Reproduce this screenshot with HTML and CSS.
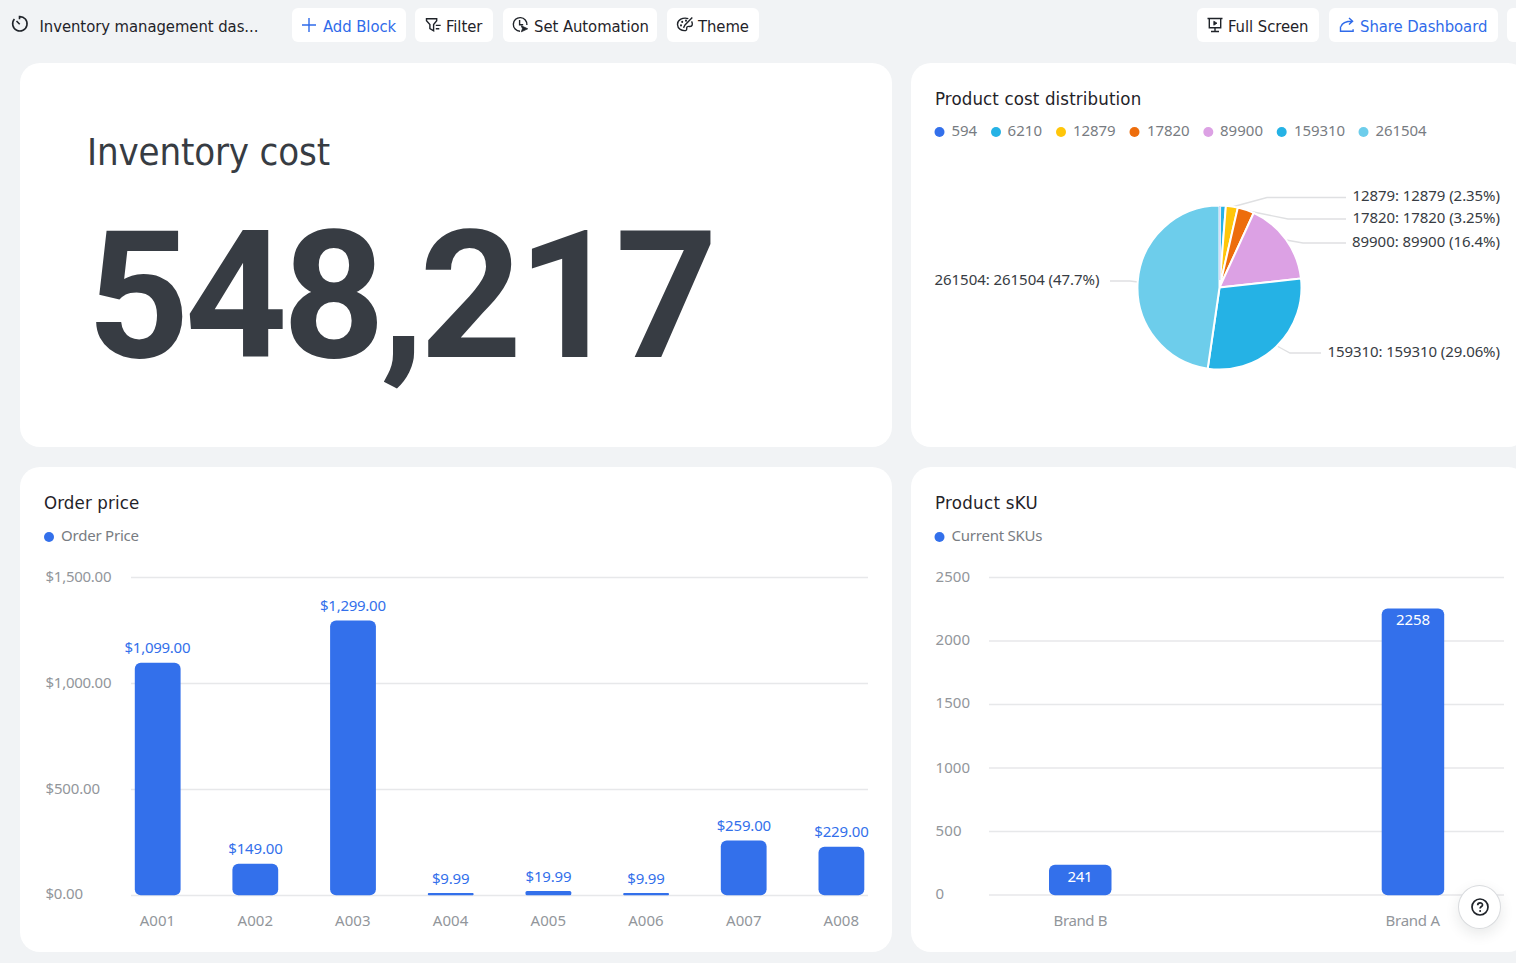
FILE: index.html
```html
<!DOCTYPE html>
<html lang="en">
<head>
<meta charset="utf-8">
<title>Inventory management dashboard</title>
<link rel="stylesheet" href="styles.css">
</head>
<body>
<header class="toolbar">
  <div class="doc">
    <svg class="icon" width="18" height="18" viewBox="0 0 18 18"><path d="M8.500 4.200V1.600A7.200 7.200 0 1 1 3.400 4.100M5.500 6l3.200 3.200" stroke-width="1.600"/></svg>
    <span class="doc-name">Inventory management das...</span>
  </div>
  <button class="btn add blue"><svg class="icon" width="16" height="16" viewBox="0 0 16 16"><path d="M8 1v14M1 8h14"/></svg><span>Add Block</span></button>
  <button class="btn filter"><svg class="icon" width="17" height="16" viewBox="0 0 17 16"><path d="M1.500 1.800h10.200v2L8.600 7.500v6.300L4.900 11.600V7.500L1.500 3.800zM10.800 8.400h4.900M10.800 11.800h3.500"/></svg><span>Filter</span></button>
  <button class="btn auto"><svg class="icon" width="17" height="17" viewBox="0 0 17 17"><path d="M8 15.200A6.800 6.800 0 1 1 14.900 9M7.600 4v4.800h3.600"/><path class="solid" d="M9.300 9.800l6.400 3-6.400 3 1.200-3z"/></svg><span>Set Automation</span></button>
  <button class="btn theme"><svg class="icon" width="18" height="17" viewBox="0 0 18 17"><path d="M12.300 2.600C6.800.9 1.400 4 1.500 8.500c.1 4.300 4.300 6.600 8.200 6 2.200-.4.1-2.600 1.500-3.700 1.500-1.200 4.300.9 5-1.800.3-1.200 0-2.600-.6-3.600M16.300 1.500L9 9l-1.500 2.800"/><path d="M5 9.300v.2M6.200 5.700v.2M10 4.600v.2" stroke-width="2" stroke-linecap="round"/></svg><span>Theme</span></button>
  <button class="btn full"><svg class="icon" width="16" height="16" viewBox="0 0 16 16"><path d="M.5 1.500h15M2.300 1.500v9.200h11.400V1.500M8 10.700v3.600M4 14.500h8"/><path class="solid" d="M6.800 4.200l3.200 2-3.200 2z"/></svg><span>Full Screen</span></button>
  <button class="btn share blue"><svg class="icon" width="16" height="16" viewBox="0 0 16 16"><path d="M1.500 9.500v4.700h12.600v-1.900M2 9.500C3 6 6.500 4.300 13.200 4.300M10 .9l3.600 3.400L10 7.600"/></svg><span>Share Dashboard</span></button>
  <button class="btn more" aria-label="More"></button>
</header>

<main class="grid">
  <section class="card metric">
    <h2 class="metric-title">Inventory cost</h2>
    <div class="metric-value">548,217</div>
  </section>

  <section class="card">
    <h3 class="title t-dist">Product cost distribution</h3>
    <svg class="chart" width="617" height="330" viewBox="911 117 617 330">
      <g class="legend">
        <circle cx="939.500" cy="132" r="5" fill="#3370eb"/><text x="951.500" y="136" textLength="25.500">594</text>
        <circle cx="996" cy="132" r="5" fill="#25b2e5"/><text x="1007.500" y="136" textLength="34.500">6210</text>
        <circle cx="1061" cy="132" r="5" fill="#ffc60a"/><text x="1073" y="136" textLength="42.500">12879</text>
        <circle cx="1134.500" cy="132" r="5" fill="#ed6d0c"/><text x="1147" y="136" textLength="42.500">17820</text>
        <circle cx="1208.300" cy="132" r="5" fill="#dca1e4"/><text x="1220" y="136" textLength="43">89900</text>
        <circle cx="1281.700" cy="132" r="5" fill="#25b2e5"/><text x="1294" y="136" textLength="51">159310</text>
        <circle cx="1363.500" cy="132" r="5" fill="#6dcdeb"/><text x="1375.500" y="136" textLength="51">261504</text>
      </g>
      <g class="leader">
        <path d="M1232 207L1267 197.500H1346"/>
        <path d="M1246 210.500L1288 219H1346"/>
        <path d="M1286 240L1303 243H1346"/>
        <path d="M1277 346L1290 353H1321"/>
        <path d="M1110 281H1130L1138 282"/>
      </g>
      <g class="slices">
        <path fill="#25b2e5" d="M1219.500 287.500L1220.100 205.500A82 82 0 0 1 1225.900 205.750Z"/>
        <path fill="#ffc60a" d="M1219.500 287.500L1225.900 205.750A82 82 0 0 1 1237.840 207.600Z"/>
        <path fill="#ed6d0c" d="M1219.500 287.500L1237.840 207.600A82 82 0 0 1 1253.670 212.960Z"/>
        <path fill="#dca1e4" d="M1219.500 287.500L1253.670 212.960A82 82 0 0 1 1301 278.450Z"/>
        <path fill="#25b2e5" d="M1219.500 287.500L1301 278.450A82 82 0 0 1 1207.700 368.650Z"/>
        <path fill="#6dcdeb" d="M1219.500 287.500L1207.700 368.650A82 82 0 0 1 1219.500 205.500Z"/>
      </g>
      <path class="sliver" d="M1219.800 206V280"/>
      <g class="pie-label">
        <text x="1352.500" y="201" textLength="147.500">12879: 12879 (2.35%)</text>
        <text x="1352.500" y="222.500" textLength="147.500">17820: 17820 (3.25%)</text>
        <text x="1352" y="246.500" textLength="148">89900: 89900 (16.4%)</text>
        <text x="1327.500" y="357" textLength="172.500">159310: 159310 (29.06%)</text>
        <text x="934.500" y="285" textLength="165">261504: 261504 (47.7%)</text>
      </g>
    </svg>
  </section>

  <section class="card">
    <h3 class="title t-price">Order price</h3>
    <svg class="chart" width="872" height="431" viewBox="20 521 872 431">
      <g class="legend"><circle cx="49" cy="537" r="5" fill="#3370eb"/><text x="61" y="541" textLength="78">Order Price</text></g>
      <path class="rule" d="M131 577.500H868M131 683.500H868M131 789.500H868M131 895.500H868"/>
      <g class="axis">
        <text x="45.500" y="582" textLength="66">$1,500.00</text>
        <text x="45.500" y="688" textLength="66">$1,000.00</text>
        <text x="45.500" y="794" textLength="54.500">$500.00</text>
        <text x="45.500" y="899" textLength="37.500">$0.00</text>
      </g>
      <g class="bars">
        <rect x="134.800" y="662.800" width="45.800" height="232.400" rx="6"/>
        <rect x="232.400" y="863.800" width="45.800" height="31.400" rx="6"/>
        <rect x="330.100" y="620.400" width="45.800" height="274.800" rx="6"/>
        <rect x="427.800" y="893.100" width="45.800" height="2.100" rx="1"/>
        <rect x="525.500" y="891" width="45.800" height="4.200" rx="1.500"/>
        <rect x="623.200" y="893.100" width="45.800" height="2.100" rx="1"/>
        <rect x="720.800" y="840.500" width="45.800" height="54.700" rx="6"/>
        <rect x="818.500" y="846.800" width="45.800" height="48.400" rx="6"/>
      </g>
      <g class="value">
        <text x="124.500" y="653" textLength="66">$1,099.00</text>
        <text x="228.300" y="854" textLength="54.500">$149.00</text>
        <text x="320" y="611" textLength="66">$1,299.00</text>
        <text x="432" y="883.500" textLength="37.500">$9.99</text>
        <text x="525.500" y="882" textLength="46">$19.99</text>
        <text x="627.300" y="883.500" textLength="37.500">$9.99</text>
        <text x="716.700" y="831" textLength="54.500">$259.00</text>
        <text x="814.300" y="837" textLength="54.500">$229.00</text>
      </g>
      <g class="axis">
        <text x="139.700" y="925.500" textLength="35.500">A001</text>
        <text x="237.500" y="925.500" textLength="35.500">A002</text>
        <text x="335" y="925.500" textLength="35.500">A003</text>
        <text x="432.800" y="925.500" textLength="35.500">A004</text>
        <text x="530.500" y="925.500" textLength="35.500">A005</text>
        <text x="628.200" y="925.500" textLength="35.500">A006</text>
        <text x="726" y="925.500" textLength="35.500">A007</text>
        <text x="823.500" y="925.500" textLength="35.500">A008</text>
      </g>
    </svg>
  </section>

  <section class="card">
    <h3 class="title t-sku">Product sKU</h3>
    <svg class="chart" width="617" height="431" viewBox="911 521 617 431">
      <g class="legend"><circle cx="939.500" cy="537" r="5" fill="#3370eb"/><text x="951.500" y="541" textLength="91">Current SKUs</text></g>
      <path class="rule" d="M989 577.500H1504M989 641H1504M989 704.500H1504M989 768H1504M989 831.500H1504M989 895H1504"/>
      <g class="axis">
        <text x="935.500" y="582" textLength="34.500">2500</text>
        <text x="935.500" y="645" textLength="34.500">2000</text>
        <text x="935.500" y="708.400" textLength="34.500">1500</text>
        <text x="935.500" y="772.500" textLength="34.500">1000</text>
        <text x="935.500" y="836" textLength="26">500</text>
        <text x="935.500" y="899">0</text>
        <text x="1053.500" y="925.500" textLength="54">Brand B</text>
        <text x="1385.500" y="925.500" textLength="54.500">Brand A</text>
      </g>
      <g class="bars">
        <rect x="1049" y="864.800" width="62.500" height="30.400" rx="6"/>
        <rect x="1381.700" y="608.500" width="62.500" height="286.700" rx="6"/>
      </g>
      <g class="inside">
        <text x="1067.500" y="882" textLength="25">241</text>
        <text x="1396" y="625.400" textLength="34">2258</text>
      </g>
    </svg>
  </section>
</main>

<button class="help" aria-label="Help"><svg class="icon" width="20" height="20" viewBox="0 0 20 20"><circle cx="10" cy="10" r="8"/><path d="M7.700 8.200c0-3 4.800-3 4.800-.3 0 1.700-2.400 1.600-2.400 3.600"/><circle class="dot" cx="10.100" cy="14" r="1"/></svg></button>
</body>
</html>
```

FILE: styles.css
```css
* { box-sizing: border-box; }
body {
  margin: 0;
  width: 1516px;
  height: 963px;
  overflow: hidden;
  background: #f1f3f5;
  color: #1f2329;
  font-family: "Noto Sans", "Open Sans", sans-serif;
}
.toolbar {
  display: flex;
  width: 1540px;
  height: 63px;
  padding: 8px 0 0 10px;
}
.doc {
  display: flex;
  align-items: center;
  width: 282px;
  height: 34px;
  font: 16.500px "DejaVu Sans Condensed", "DejaVu Sans", sans-serif;
  font-stretch: condensed;
}
.doc .icon { margin: -2px 11px 0 .5px; }
.doc-name { letter-spacing: -0.050px; white-space: nowrap; margin-top: 3px; }
.icon { flex: none; fill: none; stroke: currentColor; stroke-width: 1.400; }
.icon .solid { fill: currentColor; stroke-width: .8; }
.icon .dot { fill: currentColor; stroke: none; }
.btn {
  display: flex;
  align-items: center;
  height: 34px;
  padding: 0 0 0 10px;
  border: 0;
  border-radius: 6px;
  background: #fff;
  color: #1f2329;
  font: 16.500px "DejaVu Sans Condensed", "DejaVu Sans", sans-serif;
  font-stretch: condensed;
  letter-spacing: -0.050px;
  white-space: nowrap;
}
.btn .icon { margin-top: -1px; margin-right: 5px; }
.btn span { margin-top: 3px; }
.blue { color: #2f6bea; }
.add { width: 114px; margin-right: 9px; padding-left: 9px; }
.add .icon { margin-right: 6px; }
.filter { width: 78px; margin-right: 10px; }
.filter .icon { margin-right: 4px; }
.auto { width: 154px; margin-right: 10px; padding-left: 9px; }
.theme { width: 92px; margin-right: 438px; padding-left: 9px; }
.theme .icon { margin-right: 4px; }
.full { width: 122px; margin-right: 10px; }
.share { width: 169px; margin-right: 9px; }
.more { width: 30px; }

.grid {
  display: grid;
  grid-template-columns: 872px 617px;
  grid-template-rows: 384px 485px;
  gap: 20px 19px;
  padding-left: 20px;
}
.card {
  border-radius: 20px;
  background: #fff;
  overflow: hidden;
}
.metric { padding: 63px 0 0 67px; color: #373c43; }
.metric-title {
  margin: 0;
  font: 400 38px/52px "DejaVu Sans Condensed", "DejaVu Sans", sans-serif;
  font-stretch: condensed;
  letter-spacing: -0.150px;
}
.metric-value {
  margin: 13px 0 0;
  font: 700 179px/210px Roboto, sans-serif;
  letter-spacing: -4.900px;
}
.title {
  height: 54px;
  margin: 0;
  padding: 21.500px 0 0 24px;
  font: 400 18.500px/27px "DejaVu Sans Condensed", "DejaVu Sans", sans-serif;
  font-stretch: condensed;
  letter-spacing: 0.130px;
}
.t-sku { letter-spacing: 0.300px; }
.chart { display: block; font-size: 15px; }
.legend text { fill: #787c82; }
.axis text { fill: #92969b; }
.pie-label text { fill: #373c43; }
.value text { fill: #3370eb; }
.inside text { fill: #fff; }
.bars rect { fill: #3370eb; }
.rule { stroke: #e7e8ea; stroke-width: 1.500; fill: none; }
.leader path { stroke: #dfe0e2; stroke-width: 1.300; fill: none; }
.slices path { stroke: #fff; stroke-width: 2; stroke-linejoin: round; }
.sliver { stroke: #d5dcf5; stroke-width: 1.500; }
.help {
  position: absolute;
  left: 1458px;
  top: 885px;
  display: flex;
  align-items: center;
  justify-content: center;
  width: 43px;
  height: 44px;
  padding: 0;
  border: 1px solid #d9dbde;
  border-radius: 50%;
  background: #fff;
  color: #1f2329;
  box-shadow: 0 5px 14px rgba(31, 35, 41, .1);
}
.help .icon { stroke-width: 1.700; }
```
